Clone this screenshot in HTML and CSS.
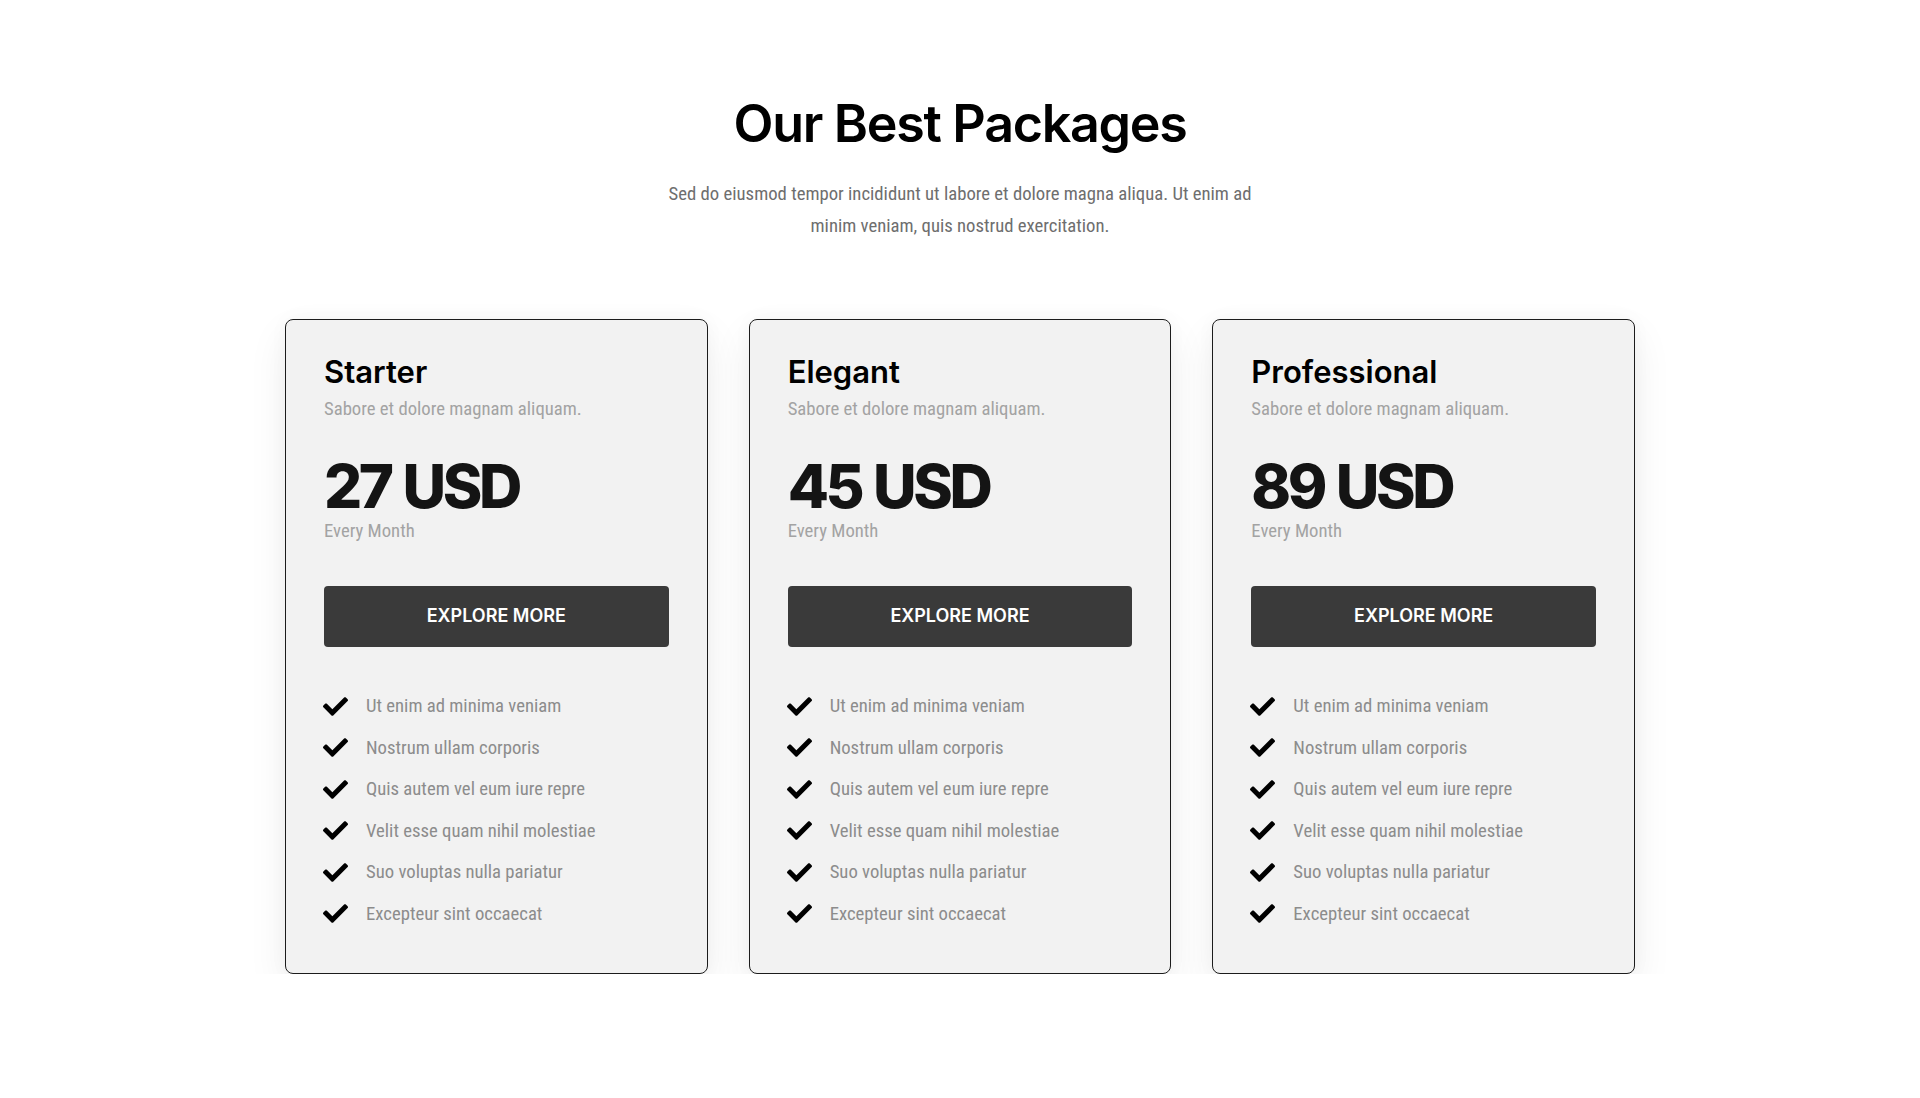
FILE: index.html
```html
<!DOCTYPE html>
<html lang="en">
<head>
<meta charset="utf-8">
<title>Our Best Packages</title>
<link rel="stylesheet" href="styles.css">
</head>
<body>
<section class="packages">
  <h1 class="packages__title">Our Best Packages</h1>
  <p class="packages__lead">Sed do eiusmod tempor incididunt ut labore et dolore magna aliqua. Ut enim ad<br>minim veniam, quis nostrud exercitation.</p>

  <div class="packages__grid">
    <article class="card">
      <h2 class="card__name">Starter</h2>
      <p class="card__sub">Sabore et dolore magnam aliquam.</p>
      <div class="card__price">27 USD</div>
      <p class="card__period">Every Month</p>
      <a class="card__btn" href="#">EXPLORE MORE</a>
      <ul class="card__list">
        <li><svg class="check" viewBox="0 64 512 384"><path d="M173.9 439.4l-166.4-166.4c-10-10-10-26.2 0-36.2l36.2-36.2c10-10 26.2-10 36.2 0L192 312.7 432.1 72.6c10-10 26.2-10 36.2 0l36.2 36.2c10 10 10 26.2 0 36.2l-294.4 294.4c-10 10-26.2 10-36.2 0z"/></svg>Ut enim ad minima veniam</li>
        <li><svg class="check" viewBox="0 64 512 384"><path d="M173.9 439.4l-166.4-166.4c-10-10-10-26.2 0-36.2l36.2-36.2c10-10 26.2-10 36.2 0L192 312.7 432.1 72.6c10-10 26.2-10 36.2 0l36.2 36.2c10 10 10 26.2 0 36.2l-294.4 294.4c-10 10-26.2 10-36.2 0z"/></svg>Nostrum ullam corporis</li>
        <li><svg class="check" viewBox="0 64 512 384"><path d="M173.9 439.4l-166.4-166.4c-10-10-10-26.2 0-36.2l36.2-36.2c10-10 26.2-10 36.2 0L192 312.7 432.1 72.6c10-10 26.2-10 36.2 0l36.2 36.2c10 10 10 26.2 0 36.2l-294.4 294.4c-10 10-26.2 10-36.2 0z"/></svg>Quis autem vel eum iure repre</li>
        <li><svg class="check" viewBox="0 64 512 384"><path d="M173.9 439.4l-166.4-166.4c-10-10-10-26.2 0-36.2l36.2-36.2c10-10 26.2-10 36.2 0L192 312.7 432.1 72.6c10-10 26.2-10 36.2 0l36.2 36.2c10 10 10 26.2 0 36.2l-294.4 294.4c-10 10-26.2 10-36.2 0z"/></svg>Velit esse quam nihil molestiae</li>
        <li><svg class="check" viewBox="0 64 512 384"><path d="M173.9 439.4l-166.4-166.4c-10-10-10-26.2 0-36.2l36.2-36.2c10-10 26.2-10 36.2 0L192 312.7 432.1 72.6c10-10 26.2-10 36.2 0l36.2 36.2c10 10 10 26.2 0 36.2l-294.4 294.4c-10 10-26.2 10-36.2 0z"/></svg>Suo voluptas nulla pariatur</li>
        <li><svg class="check" viewBox="0 64 512 384"><path d="M173.9 439.4l-166.4-166.4c-10-10-10-26.2 0-36.2l36.2-36.2c10-10 26.2-10 36.2 0L192 312.7 432.1 72.6c10-10 26.2-10 36.2 0l36.2 36.2c10 10 10 26.2 0 36.2l-294.4 294.4c-10 10-26.2 10-36.2 0z"/></svg>Excepteur sint occaecat</li>
      </ul>
    </article>

    <article class="card">
      <h2 class="card__name">Elegant</h2>
      <p class="card__sub">Sabore et dolore magnam aliquam.</p>
      <div class="card__price">45 USD</div>
      <p class="card__period">Every Month</p>
      <a class="card__btn" href="#">EXPLORE MORE</a>
      <ul class="card__list">
        <li><svg class="check" viewBox="0 64 512 384"><path d="M173.9 439.4l-166.4-166.4c-10-10-10-26.2 0-36.2l36.2-36.2c10-10 26.2-10 36.2 0L192 312.7 432.1 72.6c10-10 26.2-10 36.2 0l36.2 36.2c10 10 10 26.2 0 36.2l-294.4 294.4c-10 10-26.2 10-36.2 0z"/></svg>Ut enim ad minima veniam</li>
        <li><svg class="check" viewBox="0 64 512 384"><path d="M173.9 439.4l-166.4-166.4c-10-10-10-26.2 0-36.2l36.2-36.2c10-10 26.2-10 36.2 0L192 312.7 432.1 72.6c10-10 26.2-10 36.2 0l36.2 36.2c10 10 10 26.2 0 36.2l-294.4 294.4c-10 10-26.2 10-36.2 0z"/></svg>Nostrum ullam corporis</li>
        <li><svg class="check" viewBox="0 64 512 384"><path d="M173.9 439.4l-166.4-166.4c-10-10-10-26.2 0-36.2l36.2-36.2c10-10 26.2-10 36.2 0L192 312.7 432.1 72.6c10-10 26.2-10 36.2 0l36.2 36.2c10 10 10 26.2 0 36.2l-294.4 294.4c-10 10-26.2 10-36.2 0z"/></svg>Quis autem vel eum iure repre</li>
        <li><svg class="check" viewBox="0 64 512 384"><path d="M173.9 439.4l-166.4-166.4c-10-10-10-26.2 0-36.2l36.2-36.2c10-10 26.2-10 36.2 0L192 312.7 432.1 72.6c10-10 26.2-10 36.2 0l36.2 36.2c10 10 10 26.2 0 36.2l-294.4 294.4c-10 10-26.2 10-36.2 0z"/></svg>Velit esse quam nihil molestiae</li>
        <li><svg class="check" viewBox="0 64 512 384"><path d="M173.9 439.4l-166.4-166.4c-10-10-10-26.2 0-36.2l36.2-36.2c10-10 26.2-10 36.2 0L192 312.7 432.1 72.6c10-10 26.2-10 36.2 0l36.2 36.2c10 10 10 26.2 0 36.2l-294.4 294.4c-10 10-26.2 10-36.2 0z"/></svg>Suo voluptas nulla pariatur</li>
        <li><svg class="check" viewBox="0 64 512 384"><path d="M173.9 439.4l-166.4-166.4c-10-10-10-26.2 0-36.2l36.2-36.2c10-10 26.2-10 36.2 0L192 312.7 432.1 72.6c10-10 26.2-10 36.2 0l36.2 36.2c10 10 10 26.2 0 36.2l-294.4 294.4c-10 10-26.2 10-36.2 0z"/></svg>Excepteur sint occaecat</li>
      </ul>
    </article>

    <article class="card">
      <h2 class="card__name">Professional</h2>
      <p class="card__sub">Sabore et dolore magnam aliquam.</p>
      <div class="card__price">89 USD</div>
      <p class="card__period">Every Month</p>
      <a class="card__btn" href="#">EXPLORE MORE</a>
      <ul class="card__list">
        <li><svg class="check" viewBox="0 64 512 384"><path d="M173.9 439.4l-166.4-166.4c-10-10-10-26.2 0-36.2l36.2-36.2c10-10 26.2-10 36.2 0L192 312.7 432.1 72.6c10-10 26.2-10 36.2 0l36.2 36.2c10 10 10 26.2 0 36.2l-294.4 294.4c-10 10-26.2 10-36.2 0z"/></svg>Ut enim ad minima veniam</li>
        <li><svg class="check" viewBox="0 64 512 384"><path d="M173.9 439.4l-166.4-166.4c-10-10-10-26.2 0-36.2l36.2-36.2c10-10 26.2-10 36.2 0L192 312.7 432.1 72.6c10-10 26.2-10 36.2 0l36.2 36.2c10 10 10 26.2 0 36.2l-294.4 294.4c-10 10-26.2 10-36.2 0z"/></svg>Nostrum ullam corporis</li>
        <li><svg class="check" viewBox="0 64 512 384"><path d="M173.9 439.4l-166.4-166.4c-10-10-10-26.2 0-36.2l36.2-36.2c10-10 26.2-10 36.2 0L192 312.7 432.1 72.6c10-10 26.2-10 36.2 0l36.2 36.2c10 10 10 26.2 0 36.2l-294.4 294.4c-10 10-26.2 10-36.2 0z"/></svg>Quis autem vel eum iure repre</li>
        <li><svg class="check" viewBox="0 64 512 384"><path d="M173.9 439.4l-166.4-166.4c-10-10-10-26.2 0-36.2l36.2-36.2c10-10 26.2-10 36.2 0L192 312.7 432.1 72.6c10-10 26.2-10 36.2 0l36.2 36.2c10 10 10 26.2 0 36.2l-294.4 294.4c-10 10-26.2 10-36.2 0z"/></svg>Velit esse quam nihil molestiae</li>
        <li><svg class="check" viewBox="0 64 512 384"><path d="M173.9 439.4l-166.4-166.4c-10-10-10-26.2 0-36.2l36.2-36.2c10-10 26.2-10 36.2 0L192 312.7 432.1 72.6c10-10 26.2-10 36.2 0l36.2 36.2c10 10 10 26.2 0 36.2l-294.4 294.4c-10 10-26.2 10-36.2 0z"/></svg>Suo voluptas nulla pariatur</li>
        <li><svg class="check" viewBox="0 64 512 384"><path d="M173.9 439.4l-166.4-166.4c-10-10-10-26.2 0-36.2l36.2-36.2c10-10 26.2-10 36.2 0L192 312.7 432.1 72.6c10-10 26.2-10 36.2 0l36.2 36.2c10 10 10 26.2 0 36.2l-294.4 294.4c-10 10-26.2 10-36.2 0z"/></svg>Excepteur sint occaecat</li>
      </ul>
    </article>
  </div>
</section>
</body>
</html>
```

FILE: styles.css
```css
* {
  box-sizing: border-box;
}

html, body {
  margin: 0;
  padding: 0;
  background: #ffffff;
}

body {
  font-family: "Roboto Condensed", "Roboto", "Liberation Sans", sans-serif;
  font-stretch: 80%;
  color: #666;
}

.packages {
  padding-top: 92px;
  display: flex;
  flex-direction: column;
  align-items: center;
}

.packages__title {
  margin: 0;
  font-family: "Inter", "Liberation Sans", sans-serif;
  font-stretch: normal;
  font-weight: 600;
  font-size: 52px;
  line-height: 64px;
  letter-spacing: -1.3px;
  color: #000;
}

.packages__lead {
  margin: 22px 0 0;
  font-size: 18.7px;
  line-height: 32px;
  text-align: center;
  color: #6e6e6e;
}

.packages__grid {
  margin-top: 77px;
  width: 1350px;
  display: grid;
  grid-template-columns: repeat(3, 1fr);
  column-gap: 41px;
}

.card {
  background: #f2f2f2;
  border: 1px solid #1c1c1c;
  border-radius: 8px;
  padding: 34px 38px 45px;
  box-shadow: 0 16px 40px rgba(0, 0, 0, 0.07), 0 0 20px rgba(0, 0, 0, 0.03);
  display: flex;
  flex-direction: column;
}

.card__name {
  margin: 0;
  font-family: "Inter", "Liberation Sans", sans-serif;
  font-stretch: normal;
  font-weight: 600;
  font-size: 31px;
  line-height: 36px;
  letter-spacing: 0;
  color: #000;
}

.card__sub {
  margin: 5px 0 0;
  font-size: 18.7px;
  line-height: 28px;
  color: #a3a3a3;
}

.card__price {
  margin-top: 31px;
  font-family: "Inter", "Liberation Sans", sans-serif;
  font-stretch: normal;
  font-weight: 800;
  font-size: 60px;
  line-height: 64px;
  letter-spacing: -3.4px;
  word-spacing: 2px;
  color: #141414;
}

.card__period {
  margin: -1px 0 0;
  font-size: 18.7px;
  line-height: 28px;
  color: #a3a3a3;
}

.card__btn {
  margin-top: 41px;
  height: 61px;
  display: flex;
  align-items: center;
  justify-content: center;
  background: #3a3a3a;
  border-radius: 4px;
  color: #fff;
  text-decoration: none;
  font-family: "Inter", "Liberation Sans", sans-serif;
  font-stretch: normal;
  font-weight: 600;
  font-size: 18px;
  letter-spacing: 0;
  padding-bottom: 2px;
}

.card__list {
  list-style: none;
  margin: 45px 0 0;
  padding: 0;
  display: flex;
  flex-direction: column;
  gap: 13.6px;
}

.card__list li {
  display: flex;
  align-items: center;
  gap: 18px;
  font-size: 18.7px;
  line-height: 28px;
  color: #8c8c8c;
}

.check {
  width: 25px;
  height: 19px;
  flex: none;
  margin-left: -1px;
  fill: #000;
}
```
